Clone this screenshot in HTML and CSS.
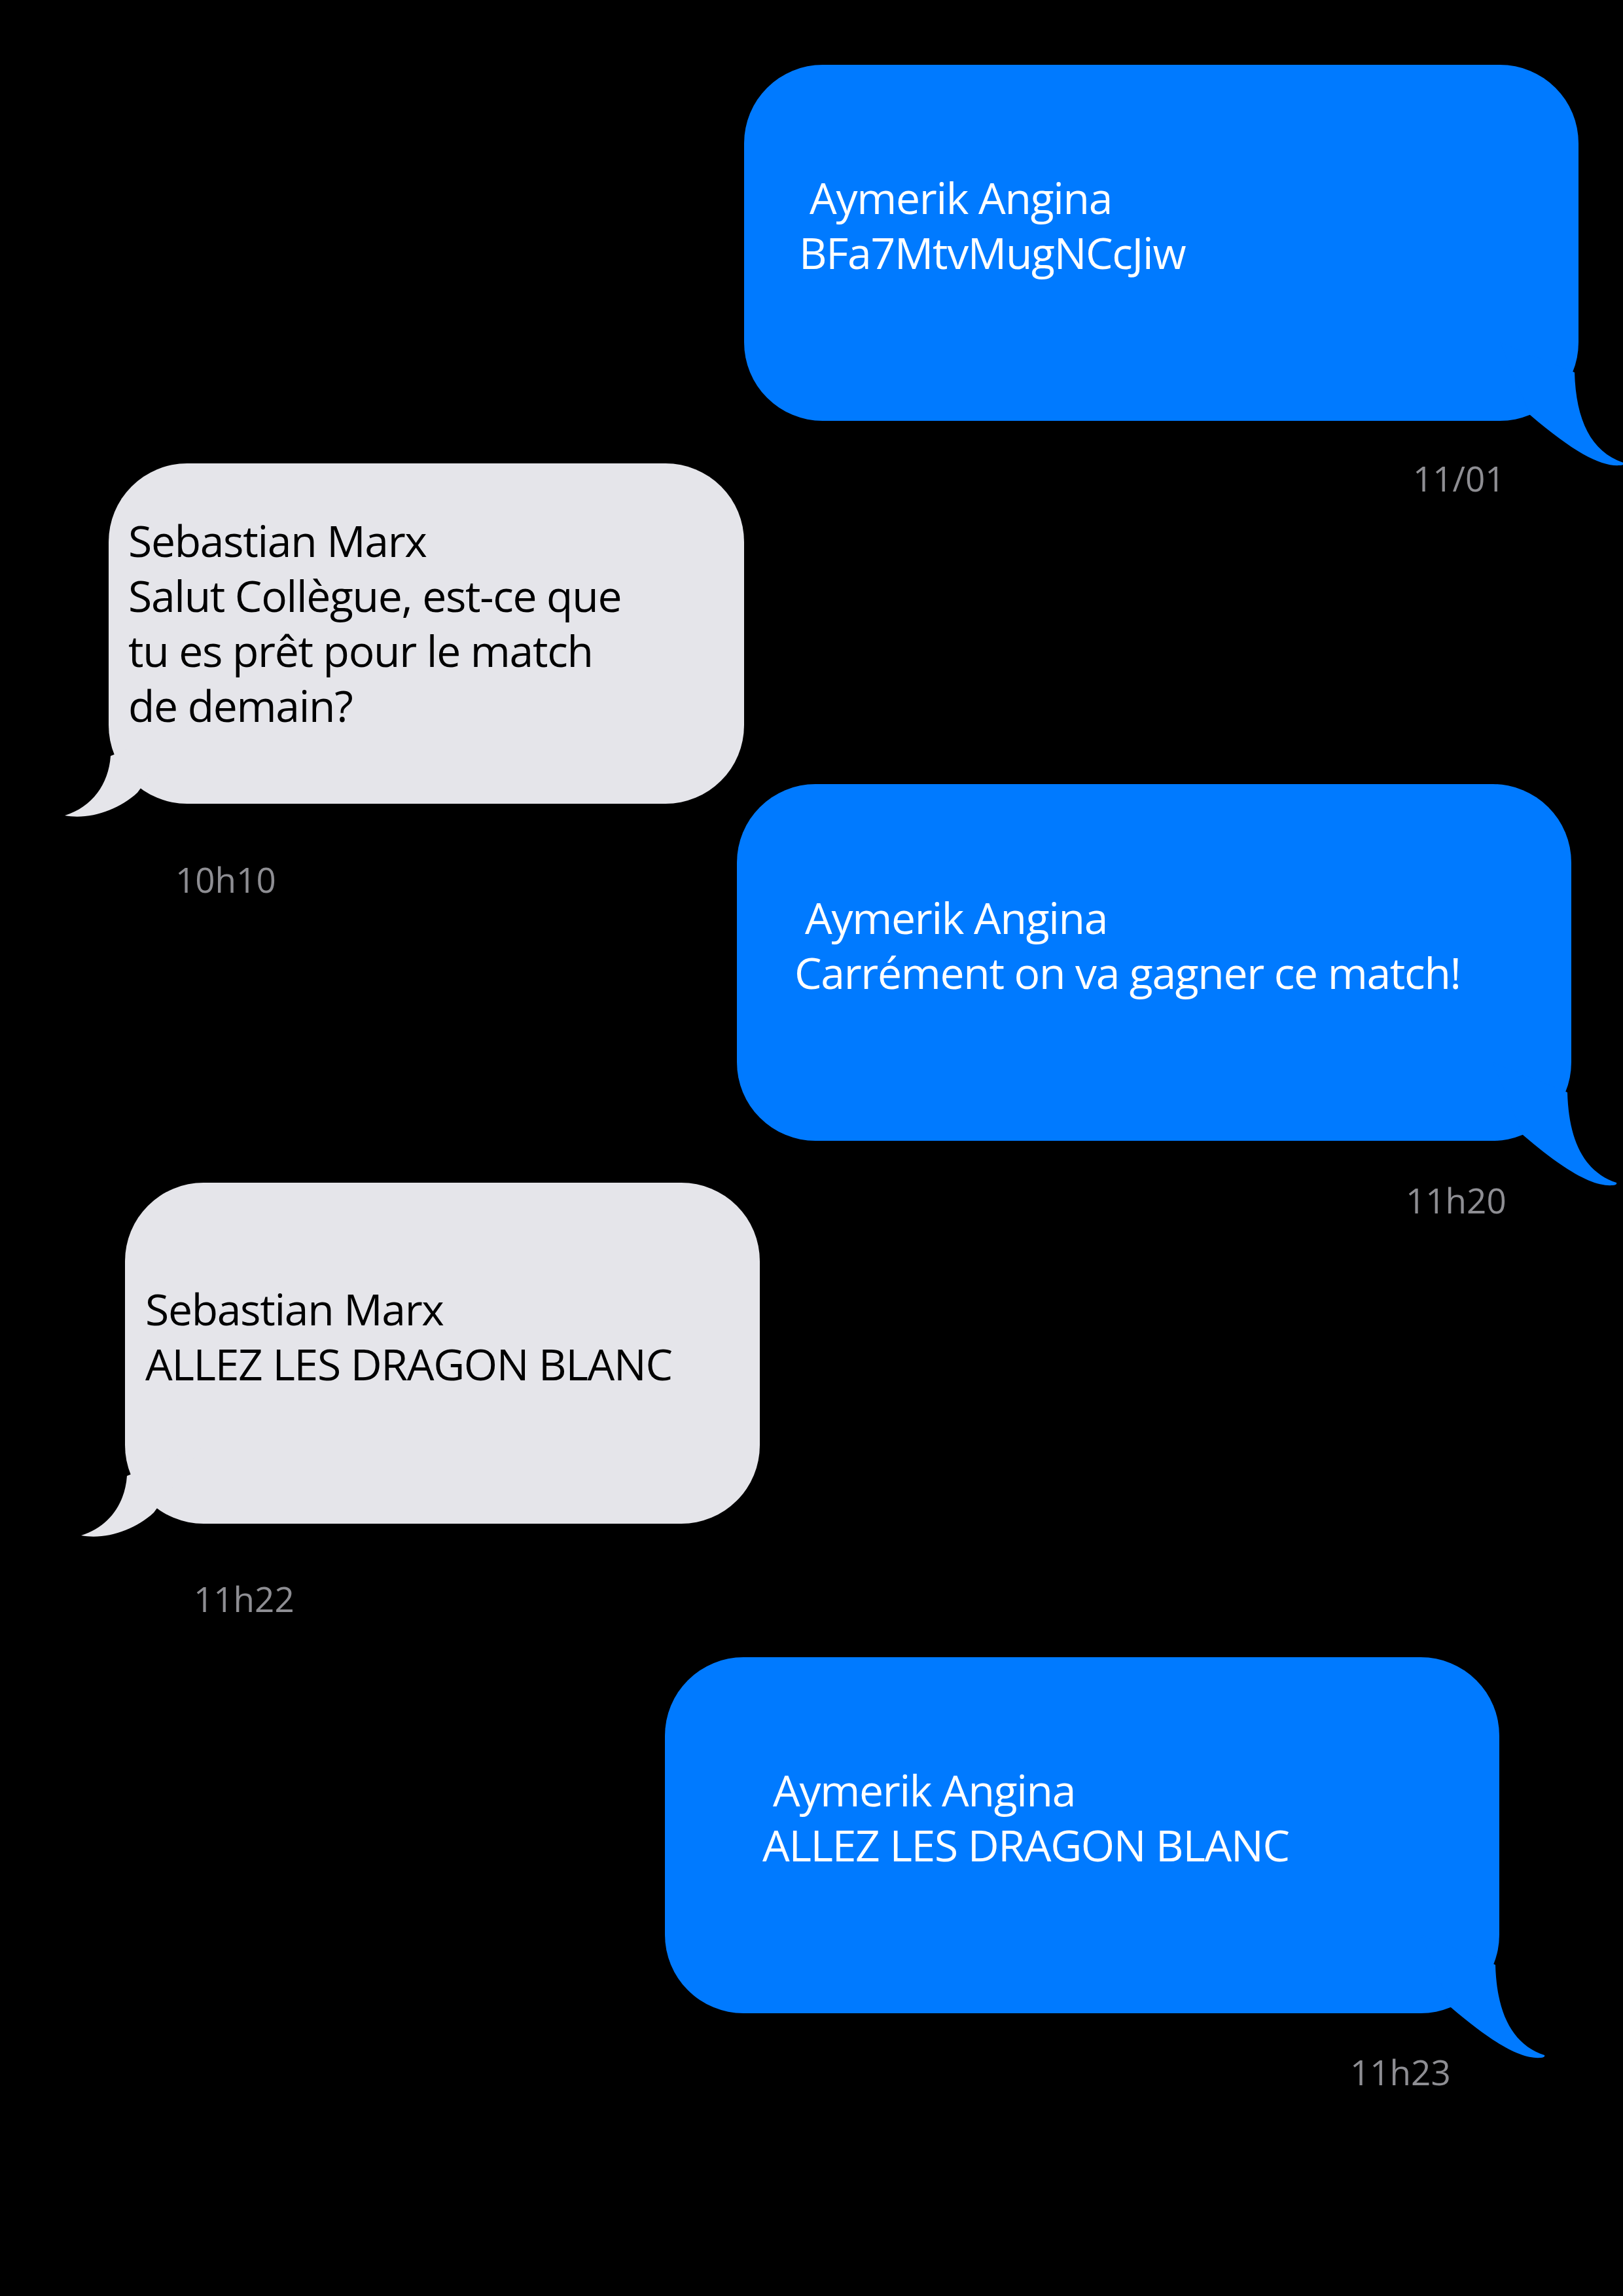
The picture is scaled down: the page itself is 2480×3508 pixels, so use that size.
FILE: index.html
```html
<!DOCTYPE html>
<html lang="fr">
<head>
<meta charset="utf-8">
<title>Messages</title>
<link rel="stylesheet" href="styles.css">
</head>
<body>
<main class="thread">
  <section class="msg out m1">
    <div class="bubble">
      <p class="name">Aymerik Angina</p>
      <p class="text">BFa7MtvMugNCcJiw</p>
      <svg class="tail" viewBox="0 0 205 205"><path d="M124,56 C126,130 150,178 199,194 C200,196 198,198 193,198 C165,200 125,180 56,121 L10,10 Z"/></svg>
    </div>
    <p class="time">11/01</p>
  </section>

  <section class="msg in m2">
    <div class="bubble">
      <p class="name">Sebastian Marx</p>
      <p class="text">Salut Collègue, est-ce que<br>tu es prêt pour le match<br>de demain?</p>
      <svg class="tail" viewBox="0 0 220 170"><path d="M83,67 C80,110 55,145 13,158 C50,165 95,150 124,123 L200,20 Z"/></svg>
    </div>
    <p class="time">10h10</p>
  </section>

  <section class="msg out m3">
    <div class="bubble">
      <p class="name">Aymerik Angina</p>
      <p class="text">Carrément on va gagner ce match!</p>
      <svg class="tail" viewBox="0 0 205 205"><path d="M124,56 C126,130 150,178 199,194 C200,196 198,198 193,198 C165,200 125,180 56,121 L10,10 Z"/></svg>
    </div>
    <p class="time">11h20</p>
  </section>

  <section class="msg in m4">
    <div class="bubble">
      <p class="name">Sebastian Marx</p>
      <p class="text">ALLEZ LES DRAGON BLANC</p>
      <svg class="tail" viewBox="0 0 220 170"><path d="M83,67 C80,110 55,145 13,158 C50,165 95,150 124,123 L200,20 Z"/></svg>
    </div>
    <p class="time">11h22</p>
  </section>

  <section class="msg out m5">
    <div class="bubble">
      <p class="name">Aymerik Angina</p>
      <p class="text">ALLEZ LES DRAGON BLANC</p>
      <svg class="tail" viewBox="0 0 205 205"><path d="M124,56 C126,130 150,178 199,194 C200,196 198,198 193,198 C165,200 125,180 56,121 L10,10 Z"/></svg>
    </div>
    <p class="time">11h23</p>
  </section>
</main>
</body>
</html>
```

FILE: styles.css
```css
html, body {
  margin: 0;
  padding: 0;
  background: #000;
}

body {
  font-family: "Open Sans", "Noto Sans", "Liberation Sans", sans-serif;
}

.thread {
  box-sizing: border-box;
  width: 2480px;
  height: 3508px;
  padding-top: 99px;
  display: flex;
  flex-direction: column;
  align-items: flex-start;
  overflow: hidden;
}

.msg {
  display: flex;
  flex-direction: column;
  align-items: flex-start;
}

.bubble {
  position: relative;
  box-sizing: border-box;
  border-radius: 120px;
  font-size: 66px;
  line-height: 84px;
  letter-spacing: -1.3px;
}

.name,
.text {
  margin: 0;
  white-space: nowrap;
}

.out .bubble {
  width: 1275px;
  height: 544px;
  background: #007aff;
  color: #fff;
}

.out .name {
  padding-left: 16px;
}

.in .bubble {
  width: 971px;
  height: 520px;
  background: #e5e5ea;
  color: #000;
}

.tail {
  position: absolute;
  overflow: visible;
}

.out .tail {
  right: -75px;
  bottom: -75px;
  width: 205px;
  height: 205px;
}

.out .tail path {
  fill: #007aff;
}

.in .tail {
  left: -80px;
  bottom: -30px;
  width: 220px;
  height: 170px;
}

.in .tail path {
  fill: #e5e5ea;
}

.time {
  margin: 0;
  font-size: 53px;
  line-height: 60px;
  letter-spacing: 0;
  color: #8e8e93;
}

/* individual message placement */
.m1 { margin-left: 1137px; }
.m1 .bubble { padding: 160px 0 0 84px; }
.m1 .time { margin-top: 58px; margin-left: 1022px; }

.m2 { margin-top: -53px; margin-left: 166px; }
.m2 .bubble { padding: 75px 0 0 30px; }
.m2 .time { margin-top: 86px; margin-left: 102px; }

.m3 { margin-top: -176px; margin-left: 1126px; }
.m3 .bubble { padding: 161px 0 0 88px; height: 545px; }
.m3 .time { margin-top: 61px; margin-left: 1022px; }

.m4 { margin-top: -57px; margin-left: 191px; }
.m4 .bubble { padding: 150px 0 0 31px; width: 970px; height: 521px; }
.m4 .time { margin-top: 85px; margin-left: 105px; }

.m5 { margin-top: 59px; margin-left: 1016px; }
.m5 .bubble { padding: 160px 0 0 149px; }
.m5 .time { margin-top: 60px; margin-left: 1047px; }
```
